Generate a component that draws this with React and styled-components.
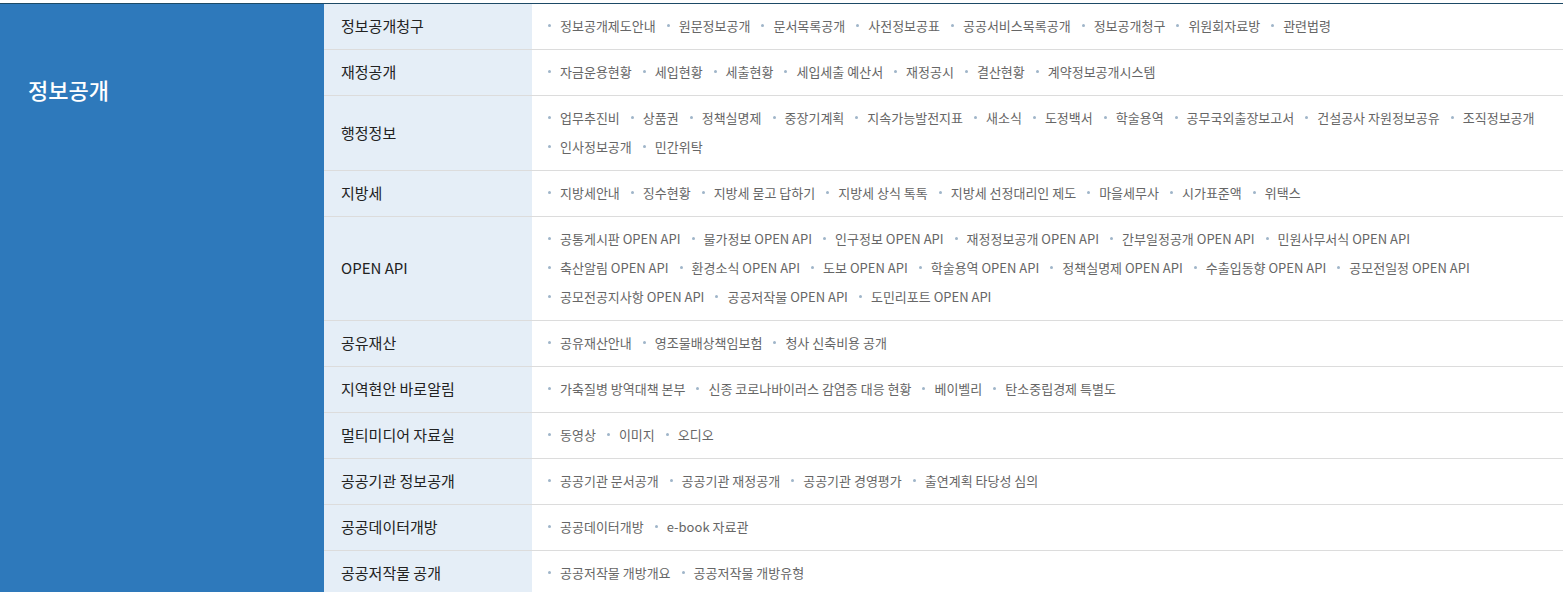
import styled, { createGlobalStyle } from "styled-components";

const GlobalStyle = createGlobalStyle`
  body {
    margin: 0;
    background: #fff;
    font-family: "Noto Sans CJK KR", "Noto Sans", sans-serif;
  }
  * {
    box-sizing: border-box;
  }
`;

const menu = [
  {
    title: "정보공개청구",
    links: ["정보공개제도안내", "원문정보공개", "문서목록공개", "사전정보공표", "공공서비스목록공개", "정보공개청구", "위원회자료방", "관련법령"],
  },
  {
    title: "재정공개",
    links: ["자금운용현황", "세입현황", "세출현황", "세입세출 예산서", "재정공시", "결산현황", "계약정보공개시스템"],
  },
  {
    title: "행정정보",
    links: ["업무추진비", "상품권", "정책실명제", "중장기계획", "지속가능발전지표", "새소식", "도정백서", "학술용역", "공무국외출장보고서", "건설공사 자원정보공유", "조직정보공개", "인사정보공개", "민간위탁"],
  },
  {
    title: "지방세",
    links: ["지방세안내", "징수현황", "지방세 묻고 답하기", "지방세 상식 톡톡", "지방세 선정대리인 제도", "마을세무사", "시가표준액", "위택스"],
  },
  {
    title: "OPEN API",
    links: [
      "공통게시판 OPEN API", "물가정보 OPEN API", "인구정보 OPEN API", "재정정보공개 OPEN API", "간부일정공개 OPEN API", "민원사무서식 OPEN API",
      "축산알림 OPEN API", "환경소식 OPEN API", "도보 OPEN API", "학술용역 OPEN API", "정책실명제 OPEN API", "수출입동향 OPEN API", "공모전일정 OPEN API",
      "공모전공지사항 OPEN API", "공공저작물 OPEN API", "도민리포트 OPEN API",
    ],
    breaks: [5, 12],
  },
  { title: "공유재산", links: ["공유재산안내", "영조물배상책임보험", "청사 신축비용 공개"] },
  { title: "지역현안 바로알림", links: ["가축질병 방역대책 본부", "신종 코로나바이러스 감염증 대응 현황", "베이벨리", "탄소중립경제 특별도"] },
  { title: "멀티미디어 자료실", links: ["동영상", "이미지", "오디오"] },
  { title: "공공기관 정보공개", links: ["공공기관 문서공개", "공공기관 재정공개", "공공기관 경영평가", "출연계획 타당성 심의"] },
  { title: "공공데이터개방", links: ["공공데이터개방", "e-book 자료관"] },
  { title: "공공저작물 공개", links: ["공공저작물 개방개요", "공공저작물 개방유형"] },
];

const App = () => {
  return (
    <>
      <GlobalStyle />
      <Container>
        <Section>
          <SectionTitle>정보공개</SectionTitle>
        </Section>
        <MenuList>
          {menu.map((row) => (
            <MenuRow key={row.title}>
              <RowLabel>{row.title}</RowLabel>
              <LinkList>
                {row.links.map((link, i) => [
                  <LinkItem key={link}>{link}</LinkItem>,
                  row.breaks && row.breaks.includes(i) ? <LineBreak key={link + "-br"} aria-hidden="true" /> : null,
                ])}
              </LinkList>
            </MenuRow>
          ))}
        </MenuList>
      </Container>
    </>
  );
};

const Container = styled.div`
  display: flex;
  margin-top: 3px;
  border-top: 1px solid #1d4a66;
`;

const Section = styled.div`
  width: 324px;
  flex-shrink: 0;
  background-color: #2e79bb;
  padding: 70px 0 0 28px;
`;

const SectionTitle = styled.h2`
  margin: 0;
  font-size: 22px;
  line-height: 30px;
  font-weight: 500;
  color: #fff;
`;

const MenuList = styled.div`
  flex: 1;
  display: flex;
  flex-direction: column;
`;

const MenuRow = styled.div`
  display: grid;
  grid-template-columns: 208px 1fr;
  border-bottom: 1px solid #dcdcdc;
`;

const RowLabel = styled.div`
  display: flex;
  align-items: center;
  padding: 0 0 2px 17px;
  background-color: #e5eef7;
  font-size: 15px;
  color: #222;
`;

const LinkList = styled.ul`
  display: flex;
  flex-wrap: wrap;
  margin: 0;
  padding: 7px 0 9px 16px;
  list-style: none;
`;

const LinkItem = styled.li`
  position: relative;
  padding-left: 12px;
  margin-right: 11px;
  font-size: 13px;
  line-height: 29px;
  color: #666;
  white-space: nowrap;

  &::before {
    content: "";
    position: absolute;
    left: 0;
    top: 13px;
    width: 3px;
    height: 3px;
    border-radius: 50%;
    background-color: #9fb5c9;
  }
`;

const LineBreak = styled.li`
  flex-basis: 100%;
  height: 0;
`;

export default App;
